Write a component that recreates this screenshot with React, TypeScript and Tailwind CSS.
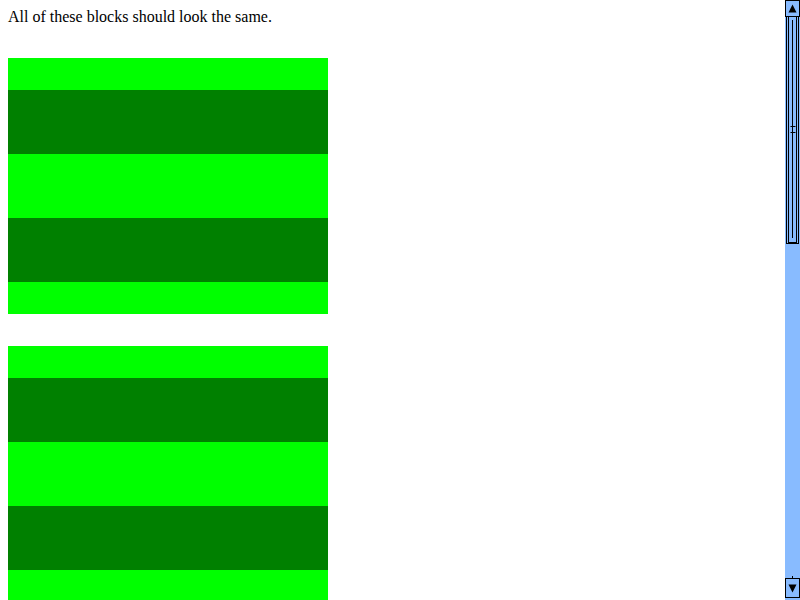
import React from 'react';

const Block: React.FC = () => (
  <div className="flex w-[320px] flex-col">
    <div className="h-8 bg-[#00ff00]" />
    <div className="h-16 bg-[#008000]" />
    <div className="h-16 bg-[#00ff00]" />
    <div className="h-16 bg-[#008000]" />
    <div className="h-8 bg-[#00ff00]" />
  </div>
);

const Scrollbar: React.FC = () => (
  <div className="flex h-[600px] w-[15px] shrink-0 flex-col bg-[#88bbff]">
    {/* up button */}
    <div className="flex h-[17px] items-center justify-center border border-black">
      <svg width="9" height="9" viewBox="0 0 9 9">
        <polygon points="4.5,0.5 8.5,8.5 0.5,8.5" fill="black" />
      </svg>
    </div>
    {/* thumb */}
    <div className="flex h-[227px] px-[1px]">
      <div className="relative flex flex-1 border-x border-b border-black px-[1px]">
        <div className="flex flex-1 justify-center border-x border-b border-black pb-1 pt-[3px]">
          <div className="w-[1px] bg-black" />
        </div>
        <div className="absolute left-1/2 top-[109px] h-[1px] w-[5px] -translate-x-1/2 bg-black" />
        <div className="absolute left-1/2 top-[115px] h-[1px] w-[5px] -translate-x-1/2 bg-black" />
      </div>
    </div>
    <div className="flex-1" />
    {/* down button */}
    <div className="flex justify-center">
      <div className="h-[2px] w-[1px] bg-black" />
    </div>
    <div className="mb-[2px] flex h-[20px] items-center justify-center border border-black">
      <svg width="9" height="9" viewBox="0 0 9 9">
        <polygon points="0.5,0.5 8.5,0.5 4.5,8.5" fill="black" />
      </svg>
    </div>
  </div>
);

export default function App() {
  return (
    <div className="flex h-[600px] w-[800px] overflow-hidden bg-white">
      <div className="flex-1 overflow-hidden p-2 font-['Liberation_Serif',serif] text-[16px] text-black">
        <p className="mb-8 leading-[18px]">All of these blocks should look the same.</p>
        <div className="flex flex-col gap-8">
          <Block />
          <Block />
        </div>
      </div>
      <Scrollbar />
    </div>
  );
}
